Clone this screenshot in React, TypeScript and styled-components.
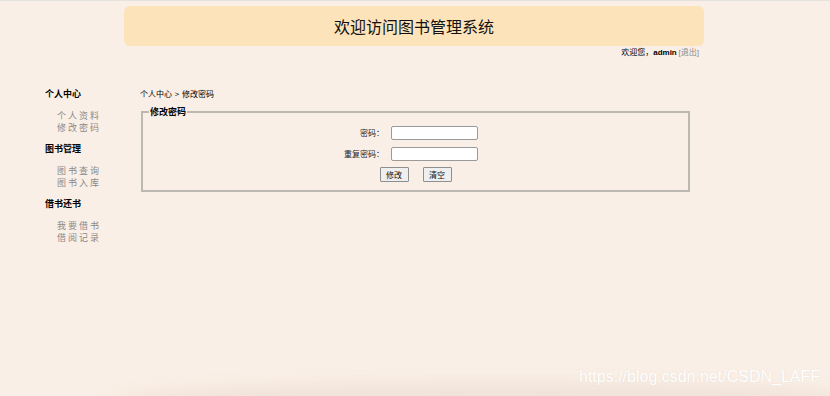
import React from "react";
import styled, { createGlobalStyle } from "styled-components";

const GlobalStyle = createGlobalStyle`
  html, body { margin: 0; padding: 0; }
  body {
    background: #faefe6;
    font-family: "Noto Sans CJK SC", "Noto Sans", sans-serif;
    color: #000;
  }
`;

const Page = styled.div`
  position: relative;
  width: 830px;
  height: 396px;
  overflow: hidden;
  border-top: 1px solid #e5e1dd;
  box-sizing: border-box;
`;

const Top = styled.div`
  width: 580px;
  margin: 5px 0 0 124px;
`;

const Banner = styled.div`
  height: 40px;
  border-radius: 6px;
  background: #fde3b9;
  font-size: 16px;
  line-height: 40px;
  text-align: center;
  color: #111;
`;

const Welcome = styled.div`
  text-align: right;
  padding-right: 5px;
  font-size: 8px;
  line-height: 12px;
  b { font-family: "Liberation Sans", Arial, sans-serif; }
`;

const Logout = styled.span`
  color: #888;
  font-family: "Liberation Sans", "Noto Sans CJK SC", sans-serif;
`;

const Main = styled.div`
  display: flex;
  margin-top: 29px;
`;

const Sidebar = styled.div`
  width: 95px;
  padding-left: 45px;
  flex-shrink: 0;
`;

const Group = styled.div`
  margin-bottom: 9px;
`;

const GroupTitle = styled.div`
  font-size: 9px;
  font-weight: bold;
  line-height: 12px;
`;

const SubList = styled.div`
  margin-top: 10px;
  padding-left: 12px;
`;

const SubItem = styled.div`
  font-size: 9px;
  line-height: 12px;
  letter-spacing: 2px;
  color: #8a8a8a;
`;

const Content = styled.div`
  flex: 1;
`;

const Crumb = styled.div`
  font-size: 8px;
  line-height: 12px;
  word-spacing: 1px;
`;

const Box = styled.fieldset`
  width: 549px;
  box-sizing: border-box;
  margin: 6px 0 0 1px;
  padding: 8px 6px 8px;
  border: 2px solid #bdb8b2;
`;

const Legend = styled.legend`
  padding: 0 1px;
  font-size: 9px;
  font-weight: bold;
  line-height: 12px;
`;

const FormGrid = styled.div`
  display: grid;
  grid-template-columns: auto 87px;
  column-gap: 7px;
  row-gap: 7px;
  justify-content: center;
  padding-right: 9px;
  align-items: center;
`;

const Label = styled.label`
  font-size: 8px;
  line-height: 14px;
  text-align: right;
  color: #222;
`;

const Field = styled.input`
  width: 87px;
  height: 14px;
  box-sizing: border-box;
  border: 1px solid #9a9a9a;
  border-radius: 2px;
  background: #fff;
  padding: 0 2px;
  margin: 0;
  font-size: 8px;
`;

const Buttons = styled.div`
  display: flex;
  justify-content: center;
  gap: 14px;
  margin-top: 6px;
`;

const Btn = styled.button`
  width: 29px;
  height: 15px;
  box-sizing: border-box;
  padding: 0;
  margin: 0;
  border: 1px solid #8e8e8e;
  border-radius: 1px;
  background: #efefef;
  font-family: "Noto Sans CJK SC", sans-serif;
  font-size: 8px;
  line-height: 13px;
  color: #111;
`;

const Watermark = styled.div`
  position: absolute;
  right: 10px;
  top: 367px;
  font-family: "Liberation Sans", Arial, sans-serif;
  font-size: 16px;
  line-height: 18px;
  color: #ffffff;
  text-shadow: 0 0 1px rgba(150, 140, 130, 0.25);
`;

const BottomShade = styled.div`
  position: absolute;
  left: 110px;
  right: -60px;
  bottom: -28px;
  height: 40px;
  border-radius: 50%;
  background: rgba(110, 80, 50, 0.08);
  filter: blur(9px);
  pointer-events: none;
`;

const menu = [
  { title: "个人中心", items: ["个人资料", "修改密码"] },
  { title: "图书管理", items: ["图书查询", "图书入库"] },
  { title: "借书还书", items: ["我要借书", "借阅记录"] },
];

export default function App() {
  return (
    <>
      <GlobalStyle />
      <Page>
        <Top>
          <Banner>欢迎访问图书管理系统</Banner>
          <Welcome>
            欢迎您，<b>admin</b> <Logout>[退出]</Logout>
          </Welcome>
        </Top>
        <Main>
          <Sidebar>
            {menu.map((g) => (
              <Group key={g.title}>
                <GroupTitle>{g.title}</GroupTitle>
                <SubList>
                  {g.items.map((it) => (
                    <SubItem key={it}>{it}</SubItem>
                  ))}
                </SubList>
              </Group>
            ))}
          </Sidebar>
          <Content>
            <Crumb>个人中心 &gt; 修改密码</Crumb>
            <Box>
              <Legend>修改密码</Legend>
              <FormGrid>
                <Label>密码：</Label>
                <Field type="password" />
                <Label>重复密码：</Label>
                <Field type="password" />
              </FormGrid>
              <Buttons>
                <Btn type="button">修改</Btn>
                <Btn type="button">清空</Btn>
              </Buttons>
            </Box>
          </Content>
        </Main>
        <BottomShade />
        <Watermark>https://blog.csdn.net/CSDN_LAFF</Watermark>
      </Page>
    </>
  );
}
